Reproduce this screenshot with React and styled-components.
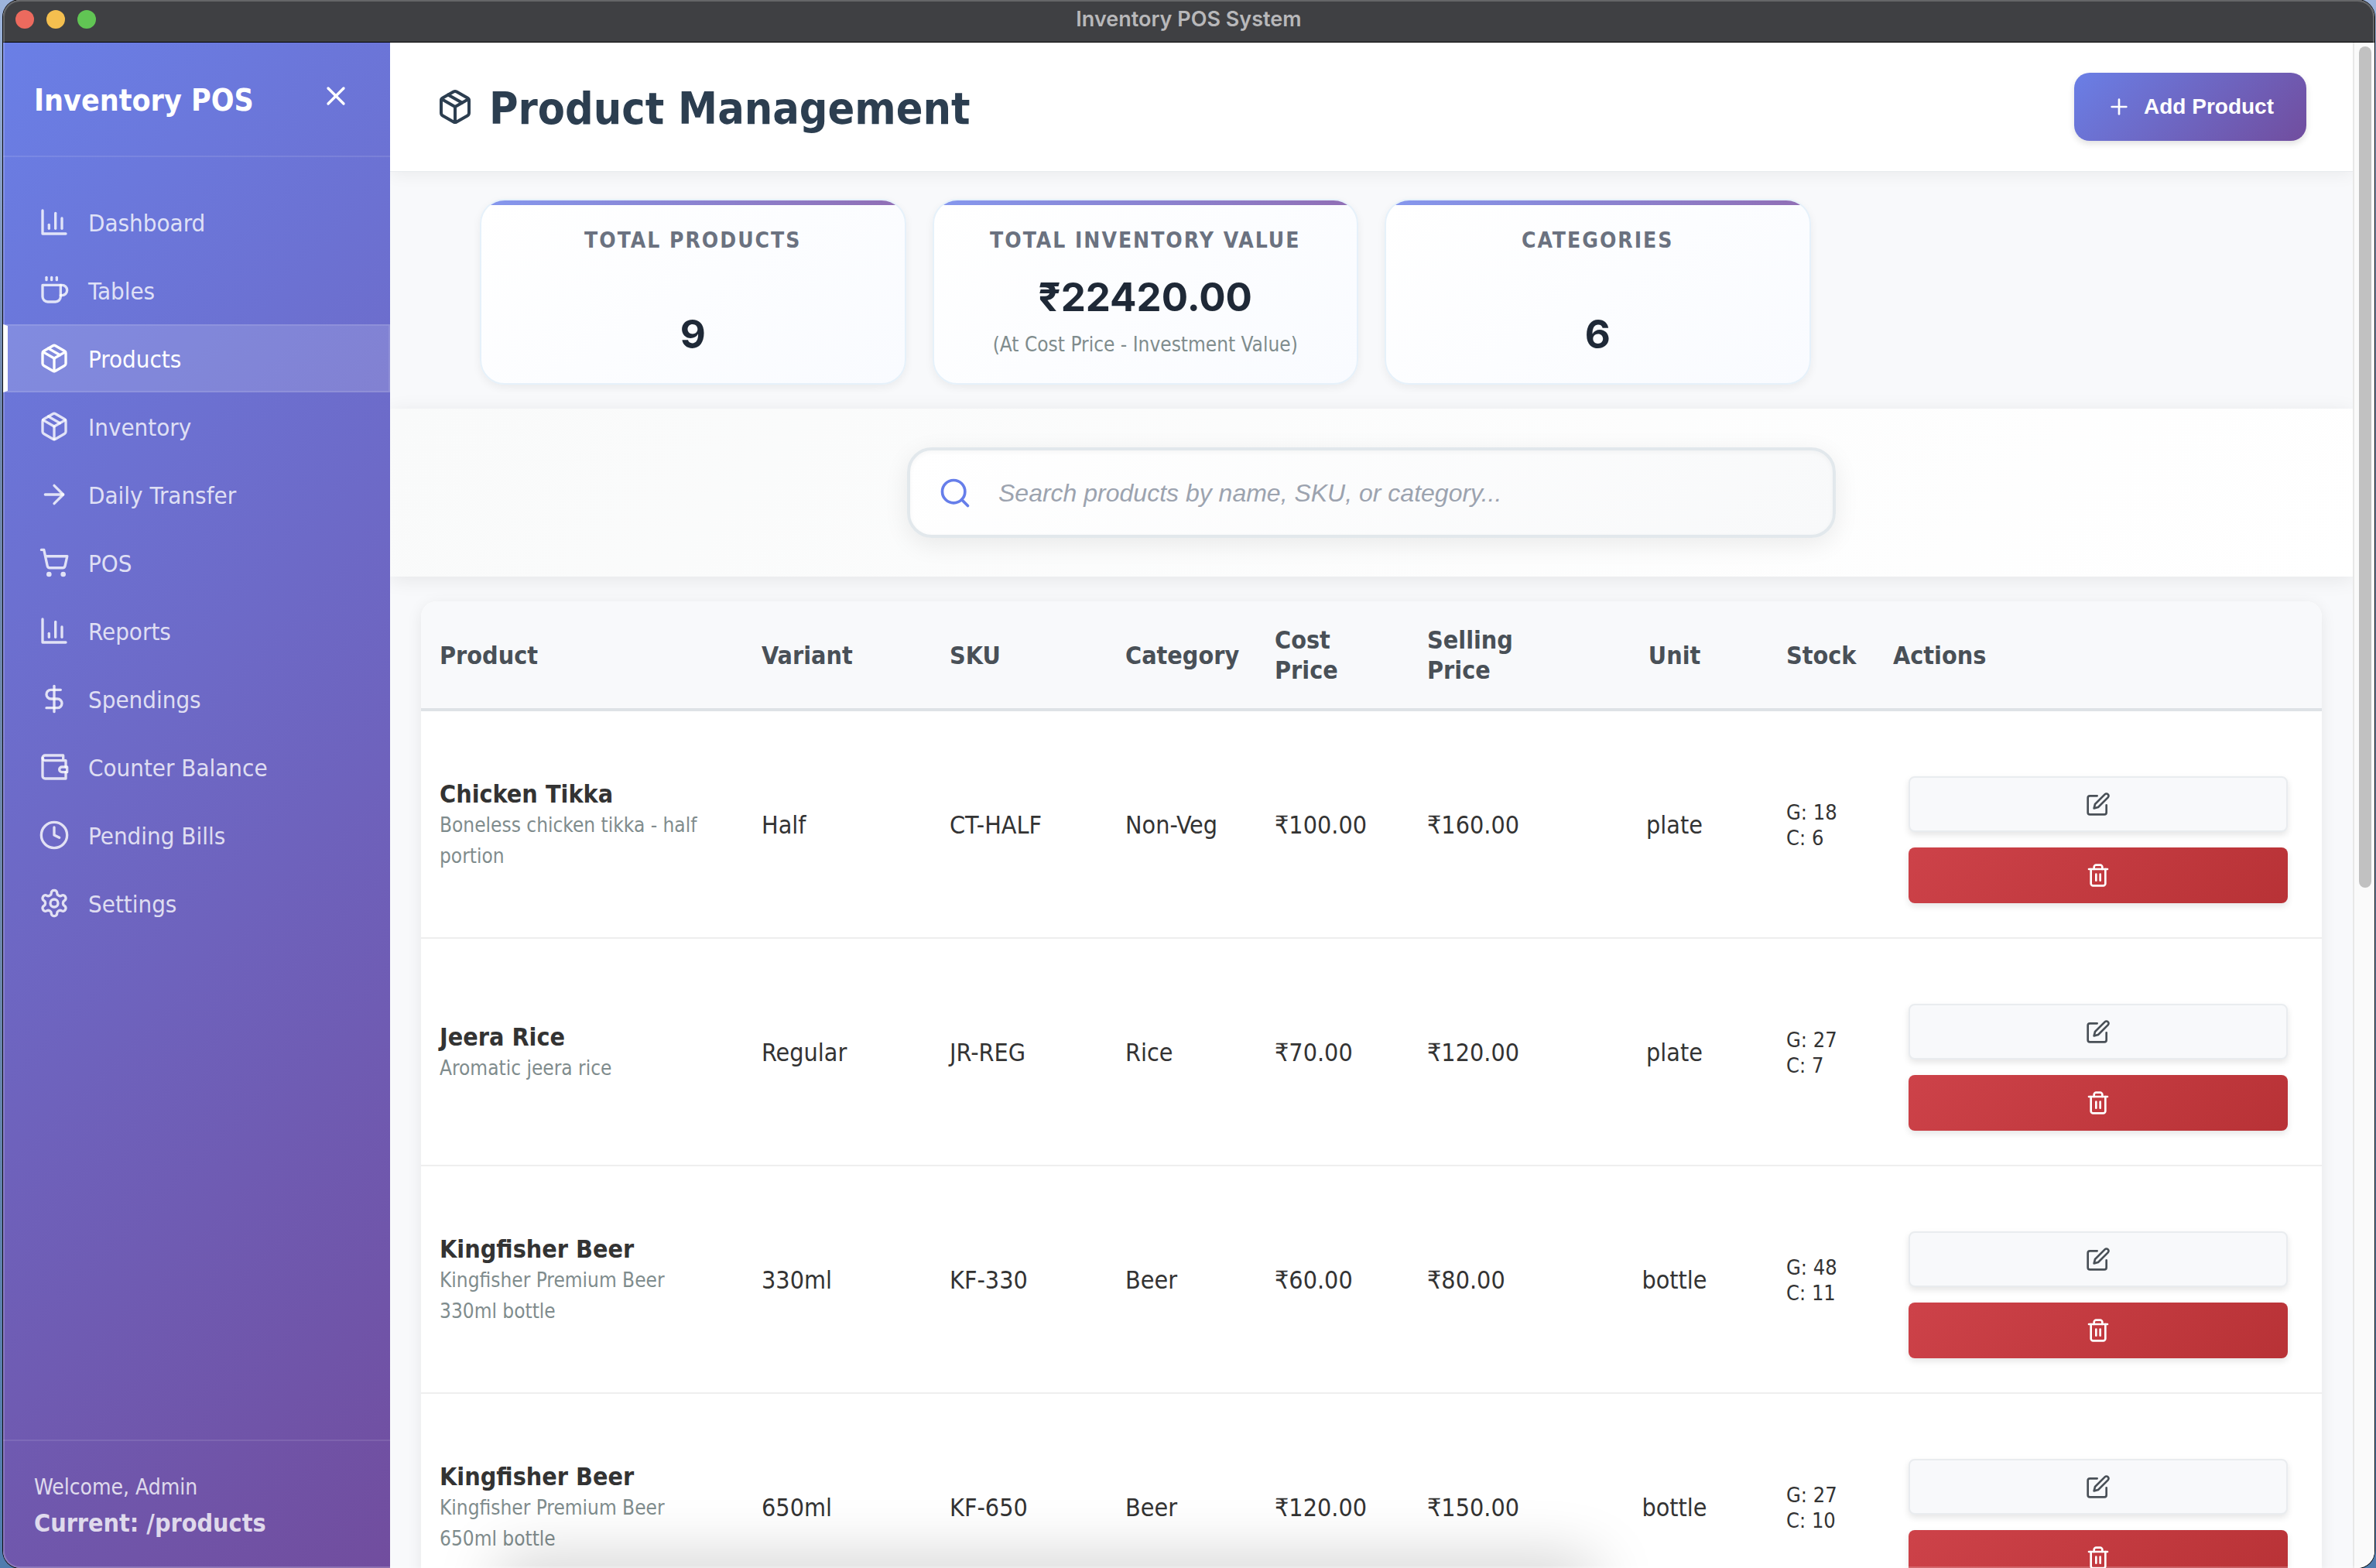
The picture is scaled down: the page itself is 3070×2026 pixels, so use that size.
import React from "react";
import styled, { createGlobalStyle, css } from "styled-components";

const uiFont = `"DejaVu Sans Condensed", "Noto Sans", sans-serif`;
const systemFont = `Inter, "Liberation Sans", sans-serif`;
const controlFont = `"Liberation Sans", Arial, sans-serif`;

const GlobalStyle = createGlobalStyle`
  *, *::before, *::after { box-sizing: border-box; }
  body {
    margin: 0;
    background: linear-gradient(180deg, #9db4dc 0%, #6f87ad 25%, #6d88ac 60%, #4f7cae 100%);
    color: #333333;
    font-family: ${uiFont};
    font-size: 32px;
    line-height: 39px;
  }
  h1, h2, h3, p { margin: 0; }
  button { cursor: pointer; }
`;

/* ---------- icons ---------- */

const Svg = styled.svg`
  display: block;
  flex: none;
  width: ${(p) => p.$size}px;
  height: ${(p) => p.$size}px;
  fill: none;
  stroke: currentColor;
  stroke-width: 2;
  stroke-linecap: round;
  stroke-linejoin: round;
`;

const shapes = {
  chart: ["M3 3v18h18", "M18 17V9", "M13 17V5", "M8 17v-3"],
  coffee: [
    "M17 8h1a4 4 0 1 1 0 8h-1",
    "M3 8h14v9a4 4 0 0 1-4 4H7a4 4 0 0 1-4-4Z",
    "M6 2v2",
    "M10 2v2",
    "M14 2v2",
  ],
  box: [
    "m7.5 4.27 9 5.15",
    "M21 8a2 2 0 0 0-1-1.73l-7-4a2 2 0 0 0-2 0l-7 4A2 2 0 0 0 3 8v8a2 2 0 0 0 1 1.73l7 4a2 2 0 0 0 2 0l7-4A2 2 0 0 0 21 16Z",
    "m3.3 7 8.7 5 8.7-5",
    "M12 22V12",
  ],
  arrow: ["M5 12h14", "m12 5 7 7-7 7"],
  cart: [
    "M9 21a1 1 0 1 1-2 0 1 1 0 0 1 2 0Z",
    "M20 21a1 1 0 1 1-2 0 1 1 0 0 1 2 0Z",
    "M2.05 2.05h2l2.66 12.42a2 2 0 0 0 2 1.58h9.78a2 2 0 0 0 1.95-1.57l1.65-7.43H5.12",
  ],
  dollar: ["M12 2v20", "M17 5H9.5a3.5 3.5 0 0 0 0 7h5a3.5 3.5 0 0 1 0 7H6"],
  wallet: [
    "M21 12V7H5a2 2 0 0 1 0-4h14v4",
    "M3 5v14a2 2 0 0 0 2 2h16v-5",
    "M18 12a2 2 0 0 0 0 4h4v-4Z",
  ],
  clock: ["M22 12a10 10 0 1 1-20 0 10 10 0 0 1 20 0Z", "M12 6v6l4 2"],
  gear: [
    "M12.22 2h-.44a2 2 0 0 0-2 2v.18a2 2 0 0 1-1 1.73l-.43.25a2 2 0 0 1-2 0l-.15-.08a2 2 0 0 0-2.73.73l-.22.38a2 2 0 0 0 .73 2.73l.15.1a2 2 0 0 1 1 1.72v.51a2 2 0 0 1-1 1.74l-.15.09a2 2 0 0 0-.73 2.73l.22.38a2 2 0 0 0 2.73.73l.15-.08a2 2 0 0 1 2 0l.43.25a2 2 0 0 1 1 1.73V20a2 2 0 0 0 2 2h.44a2 2 0 0 0 2-2v-.18a2 2 0 0 1 1-1.73l.43-.25a2 2 0 0 1 2 0l.15.08a2 2 0 0 0 2.73-.73l.22-.39a2 2 0 0 0-.73-2.73l-.15-.08a2 2 0 0 1-1-1.74v-.5a2 2 0 0 1 1-1.74l.15-.09a2 2 0 0 0 .73-2.73l-.22-.38a2 2 0 0 0-2.73-.73l-.15.08a2 2 0 0 1-2 0l-.43-.25a2 2 0 0 1-1-1.73V4a2 2 0 0 0-2-2z",
    "M15 12a3 3 0 1 1-6 0 3 3 0 0 1 6 0Z",
  ],
  close: ["M18 6 6 18", "m6 6 12 12"],
  plus: ["M5 12h14", "M12 5v14"],
  search: ["M19 11a8 8 0 1 1-16 0 8 8 0 0 1 16 0Z", "m21 21-4.3-4.3"],
  edit: [
    "M11 4H4a2 2 0 0 0-2 2v14a2 2 0 0 0 2 2h14a2 2 0 0 0 2-2v-7",
    "M18.5 2.5a2.12 2.12 0 0 1 3 3L12 15l-4 1 1-4Z",
  ],
  trash: [
    "M3 6h18",
    "M19 6v14c0 1-1 2-2 2H7c-1 0-2-1-2-2V6",
    "M8 6V4c0-1 1-2 2-2h4c1 0 2 1 2 2v2",
    "M10 11v6",
    "M14 11v6",
  ],
};

function Icon({ name, size }) {
  return (
    <Svg $size={size} viewBox="0 0 24 24" aria-hidden="true">
      {shapes[name].map((d) => (
        <path key={d} d={d} />
      ))}
    </Svg>
  );
}

/* ---------- window ---------- */

const Desktop = styled.div`
  height: 100vh;
  padding: 0 2px 0 4px;
`;

const AppWindow = styled.div`
  position: relative;
  display: flex;
  flex-direction: column;
  height: 100%;
  overflow: hidden;
  border-radius: 22px;
  background: #f8f9fb;
  box-shadow: 0 0 0 1px #0b0b0c;

  &::after {
    content: "";
    position: absolute;
    inset: 0;
    border-radius: 22px;
    box-shadow: inset 0 0 0 2px rgba(255, 255, 255, 0.2);
    pointer-events: none;
  }
`;

const TitleBar = styled.header`
  display: grid;
  grid-template-columns: 1fr auto 1fr;
  align-items: center;
  flex: none;
  height: 55px;
  padding: 0 16px 4px;
  border-bottom: 1px solid #000000;
  background: #3f4043;
`;

const Lights = styled.div`
  display: flex;
  gap: 16px;
`;

const Light = styled.span`
  width: 24px;
  height: 24px;
  border-radius: 50%;
  background: ${(p) => p.$color};
`;

const WindowTitle = styled.span`
  color: #b8b8ba;
  font-family: ${systemFont};
  font-size: 27px;
  font-weight: 600;
  line-height: 32px;
`;

const Body = styled.div`
  display: flex;
  flex: 1;
  min-height: 0;
`;

/* ---------- sidebar ---------- */

const Sidebar = styled.aside`
  display: flex;
  flex-direction: column;
  flex: none;
  width: 500px;
  background: linear-gradient(135deg, #6a7fe6 0%, #714d9e 100%);
  color: #ffffff;
`;

const SidebarHeader = styled.div`
  display: flex;
  align-items: center;
  justify-content: space-between;
  height: 148px;
  padding: 0 40px;
  border-bottom: 2px solid rgba(255, 255, 255, 0.1);
`;

const Brand = styled.h2`
  padding-top: 4px;
  font-size: 39px;
  font-weight: 700;
  line-height: 48px;
`;

const CloseButton = styled.button`
  padding: 8px 10px 16px;
  border: 0;
  background: none;
  color: inherit;
`;

const Nav = styled.nav`
  flex: 1;
  padding: 40px 0;
`;

const NavItem = styled.a`
  display: flex;
  align-items: center;
  gap: 24px;
  height: 88px;
  padding: 0 40px;
  border: 2px solid transparent;
  border-left-width: 6px;
  color: rgba(255, 255, 255, 0.8);
  font-size: 31px;
  text-decoration: none;

  ${(p) =>
    p.$active &&
    css`
      border-color: rgba(255, 255, 255, 0.1);
      border-left-color: #ffffff;
      background: rgba(255, 255, 255, 0.15);
      color: #ffffff;
    `}
`;

const NavLabel = styled.span`
  padding-top: 2px;
`;

const SidebarFooter = styled.div`
  display: flex;
  flex-direction: column;
  gap: 8px;
  padding: 40px 40px 38px;
  border-top: 2px solid rgba(255, 255, 255, 0.1);
  color: rgba(255, 255, 255, 0.8);
`;

const Welcome = styled.p`
  font-size: 28px;
`;

const CurrentPath = styled.p`
  font-size: 32px;
  font-weight: 700;
`;

/* ---------- page ---------- */

const Page = styled.main`
  flex: 1;
  min-width: 0;
  overflow: hidden auto;
  scrollbar-width: none;
  background: #f8f9fb;
`;

const PageHeader = styled.div`
  display: flex;
  align-items: center;
  justify-content: space-between;
  padding: 39px 60px;
  border-bottom: 1px solid #e9ecef;
  background: #ffffff;
  box-shadow: 0 4px 20px rgba(0, 0, 0, 0.06);
`;

const PageTitle = styled.h1`
  display: flex;
  align-items: center;
  gap: 20px;
  color: #2c3e50;
  font-size: 57px;
  font-weight: 700;
  line-height: 72px;
`;

const TitleText = styled.span`
  padding-top: 4px;
`;

const AddButton = styled.button`
  display: flex;
  align-items: center;
  gap: 16px;
  height: 88px;
  padding: 0 42px;
  border: 0;
  border-radius: 20px;
  background: linear-gradient(135deg, #6a7fe6 0%, #714d9e 100%);
  box-shadow: 0 4px 8px rgba(0, 0, 0, 0.12);
  color: #ffffff;
  font-family: ${controlFont};
  font-size: 28px;
  font-weight: 700;
`;

const Stats = styled.section`
  display: grid;
  grid-template-columns: repeat(4, 1fr);
  gap: 34px;
  padding: 35px 116px 31px;
`;

const StatCard = styled.article`
  position: relative;
  display: flex;
  flex-direction: column;
  justify-content: space-between;
  height: 240px;
  padding: 34px 32px 32px;
  overflow: hidden;
  border: 2px solid #e6f1fa;
  border-radius: 32px;
  background: linear-gradient(145deg, #ffffff 0%, #f9fbff 100%);
  box-shadow: 0 4px 12px rgba(0, 0, 0, 0.06);
  text-align: center;

  &::before {
    content: "";
    position: absolute;
    inset: 0 0 auto;
    height: 6px;
    background: linear-gradient(90deg, #667eea, #764ba2);
    opacity: 0.8;
  }
`;

const StatLabel = styled.h3`
  color: #6b7280;
  font-size: 28px;
  font-weight: 700;
  letter-spacing: 2px;
  line-height: 36px;
  text-transform: uppercase;
`;

const StatValue = styled.p`
  color: #1f2937;
  font-family: ${systemFont};
  font-size: 51px;
  font-weight: 700;
  line-height: 62px;
`;

const StatNote = styled.p`
  margin-top: 12px;
  color: #7f8c8d;
  font-size: 26px;
  line-height: 36px;
`;

const SearchSection = styled.section`
  display: flex;
  justify-content: center;
  padding: 50px 40px;
  background: linear-gradient(135deg, #f9fafa 0%, #ffffff 100%);
  box-shadow: 0 4px 24px rgba(0, 0, 0, 0.08);
`;

const SearchBox = styled.label`
  display: flex;
  align-items: center;
  gap: 34px;
  width: 1200px;
  max-width: 100%;
  height: 117px;
  padding: 0 36px;
  border: 4px solid #e2e8ec;
  border-radius: 32px;
  background: linear-gradient(145deg, #ffffff 0%, #f8f9fa 100%);
  box-shadow:
    0 8px 32px rgba(0, 0, 0, 0.08),
    inset 0 2px 6px rgba(0, 0, 0, 0.04);
  color: #667eea;
`;

const SearchInput = styled.input`
  flex: 1;
  min-width: 0;
  padding: 0;
  border: 0;
  outline: 0;
  background: none;
  color: #1f2937;
  font-family: ${controlFont};
  font-size: 32px;
  line-height: 40px;

  &::placeholder {
    color: #9ca3af;
    font-style: italic;
    opacity: 1;
  }
`;

const TableCard = styled.section`
  margin: 32px 40px;
  overflow: hidden;
  border-radius: 20px;
  background: #ffffff;
  box-shadow: 0 4px 20px rgba(0, 0, 0, 0.08);
`;

const Table = styled.table`
  width: 100%;
  border-spacing: 0;
  table-layout: fixed;
`;

const Col = styled.col`
  width: ${(p) => (p.$width ? `${p.$width}px` : "auto")};
`;

const Th = styled.th`
  padding: 31px 24px 29px;
  border-bottom: 4px solid #dee2e6;
  background: #f8f9fb;
  color: #495057;
  font-size: 32px;
  font-weight: 700;
  text-align: ${(p) => p.$align || "left"};
`;

const Td = styled.td`
  padding: 26px 24px 24px;
  border-bottom: 2px solid #eeeeee;
  font-size: 32px;
  text-align: ${(p) => p.$align || "left"};
`;

const ProductName = styled.strong`
  display: block;
`;

const ProductNote = styled.span`
  display: block;
  color: #7f8c8d;
  font-size: 26px;
  line-height: 40px;
`;

const StockLine = styled.span`
  display: block;
  font-size: 27px;
  line-height: 33px;
`;

const ActionsCell = styled(Td)`
  padding: 84px 44px 44px;
`;

const Actions = styled.div`
  display: flex;
  flex-direction: column;
  gap: 20px;
`;

const ActionButton = styled.button`
  display: flex;
  align-items: center;
  justify-content: center;
  height: 72px;
  padding: 0;
  border: 2px solid #e9ecef;
  border-radius: 8px;
  background: #f8f9fb;
  box-shadow: 0 4px 8px rgba(0, 0, 0, 0.1);
  color: #495057;

  ${(p) =>
    p.$danger &&
    css`
      border: 0;
      background: linear-gradient(135deg, #cd4249 0%, #b83236 100%);
      color: #ffffff;
    `}
`;

const ScrollTrack = styled.div`
  flex: none;
  width: 28px;
  padding: 5px 4px 5px 6px;
  border-left: 2px solid #e8e8e8;
  background: #fafafa;
`;

const ScrollThumb = styled.div`
  height: calc(55% + 8px);
  border-radius: 8px;
  background: #c1c1c1;
`;

/* soft shade that the dock casts over the lower edge of the window */
const DockShade = styled.div`
  position: absolute;
  right: 33%;
  bottom: -40px;
  left: 21%;
  height: 40px;
  border-radius: 40px;
  box-shadow: 0 0 80px 8px rgba(0, 0, 0, 0.22);
  pointer-events: none;
`;

/* ---------- data ---------- */

const navItems = [
  { label: "Dashboard", icon: "chart", href: "#/dashboard" },
  { label: "Tables", icon: "coffee", href: "#/tables" },
  { label: "Products", icon: "box", href: "#/products", active: true },
  { label: "Inventory", icon: "box", href: "#/inventory" },
  { label: "Daily Transfer", icon: "arrow", href: "#/daily-transfer" },
  { label: "POS", icon: "cart", href: "#/pos" },
  { label: "Reports", icon: "chart", href: "#/reports" },
  { label: "Spendings", icon: "dollar", href: "#/spendings" },
  { label: "Counter Balance", icon: "wallet", href: "#/counter-balance" },
  { label: "Pending Bills", icon: "clock", href: "#/pending-bills" },
  { label: "Settings", icon: "gear", href: "#/settings" },
];

const stats = [
  { label: "Total Products", value: "9" },
  {
    label: "Total Inventory Value",
    value: "₹22420.00",
    note: "(At Cost Price - Investment Value)",
  },
  { label: "Categories", value: "6" },
];

const columns = [
  { title: "Product", width: 416 },
  { title: "Variant", width: 243 },
  { title: "SKU", width: 227 },
  { title: "Category", width: 193 },
  { title: "Cost Price", width: 197 },
  { title: "Selling Price", width: 223 },
  { title: "Unit", width: 241, align: "center" },
  { title: "Stock", width: 138 },
  { title: "Actions" },
];

const products = [
  {
    name: "Chicken Tikka",
    note: "Boneless chicken tikka - half portion",
    variant: "Half",
    sku: "CT-HALF",
    category: "Non-Veg",
    cost: "₹100.00",
    price: "₹160.00",
    unit: "plate",
    godown: 18,
    counter: 6,
  },
  {
    name: "Jeera Rice",
    note: "Aromatic jeera rice",
    variant: "Regular",
    sku: "JR-REG",
    category: "Rice",
    cost: "₹70.00",
    price: "₹120.00",
    unit: "plate",
    godown: 27,
    counter: 7,
  },
  {
    name: "Kingfisher Beer",
    note: "Kingfisher Premium Beer 330ml bottle",
    variant: "330ml",
    sku: "KF-330",
    category: "Beer",
    cost: "₹60.00",
    price: "₹80.00",
    unit: "bottle",
    godown: 48,
    counter: 11,
  },
  {
    name: "Kingfisher Beer",
    note: "Kingfisher Premium Beer 650ml bottle",
    variant: "650ml",
    sku: "KF-650",
    category: "Beer",
    cost: "₹120.00",
    price: "₹150.00",
    unit: "bottle",
    godown: 27,
    counter: 10,
  },
];

/* ---------- app ---------- */

export default function App() {
  return (
    <Desktop>
      <GlobalStyle />
      <AppWindow>
        <TitleBar>
          <Lights>
            <Light $color="#ec6a5e" />
            <Light $color="#f4bf4f" />
            <Light $color="#61c554" />
          </Lights>
          <WindowTitle>Inventory POS System</WindowTitle>
        </TitleBar>
        <Body>
          <Sidebar>
            <SidebarHeader>
              <Brand>Inventory POS</Brand>
              <CloseButton type="button" aria-label="Close menu">
                <Icon name="close" size={40} />
              </CloseButton>
            </SidebarHeader>
            <Nav>
              {navItems.map((item) => (
                <NavItem key={item.label} href={item.href} $active={item.active}>
                  <Icon name={item.icon} size={40} />
                  <NavLabel>{item.label}</NavLabel>
                </NavItem>
              ))}
            </Nav>
            <SidebarFooter>
              <Welcome>Welcome, Admin</Welcome>
              <CurrentPath>Current: /products</CurrentPath>
            </SidebarFooter>
          </Sidebar>

          <Page>
            <PageHeader>
              <PageTitle>
                <Icon name="box" size={48} />
                <TitleText>Product Management</TitleText>
              </PageTitle>
              <AddButton type="button">
                <Icon name="plus" size={32} />
                Add Product
              </AddButton>
            </PageHeader>

            <Stats>
              {stats.map((stat) => (
                <StatCard key={stat.label}>
                  <StatLabel>{stat.label}</StatLabel>
                  <div>
                    <StatValue>{stat.value}</StatValue>
                    {stat.note && <StatNote>{stat.note}</StatNote>}
                  </div>
                </StatCard>
              ))}
            </Stats>

            <SearchSection>
              <SearchBox>
                <Icon name="search" size={44} />
                <SearchInput
                  type="text"
                  aria-label="Search products"
                  placeholder="Search products by name, SKU, or category..."
                />
              </SearchBox>
            </SearchSection>

            <TableCard>
              <Table>
                <colgroup>
                  {columns.map((column) => (
                    <Col key={column.title} $width={column.width} />
                  ))}
                </colgroup>
                <thead>
                  <tr>
                    {columns.map((column) => (
                      <Th key={column.title} scope="col" $align={column.align}>
                        {column.title}
                      </Th>
                    ))}
                  </tr>
                </thead>
                <tbody>
                  {products.map((product) => (
                    <tr key={product.sku}>
                      <Td>
                        <ProductName>{product.name}</ProductName>
                        <ProductNote>{product.note}</ProductNote>
                      </Td>
                      <Td>{product.variant}</Td>
                      <Td>{product.sku}</Td>
                      <Td>{product.category}</Td>
                      <Td>{product.cost}</Td>
                      <Td>{product.price}</Td>
                      <Td $align="center">{product.unit}</Td>
                      <Td>
                        <StockLine>G: {product.godown}</StockLine>
                        <StockLine>C: {product.counter}</StockLine>
                      </Td>
                      <ActionsCell>
                        <Actions>
                          <ActionButton type="button" aria-label="Edit product">
                            <Icon name="edit" size={32} />
                          </ActionButton>
                          <ActionButton type="button" aria-label="Delete product" $danger>
                            <Icon name="trash" size={32} />
                          </ActionButton>
                        </Actions>
                      </ActionsCell>
                    </tr>
                  ))}
                </tbody>
              </Table>
            </TableCard>
          </Page>
          <ScrollTrack>
            <ScrollThumb />
          </ScrollTrack>
        </Body>
        <DockShade />
      </AppWindow>
    </Desktop>
  );
}
